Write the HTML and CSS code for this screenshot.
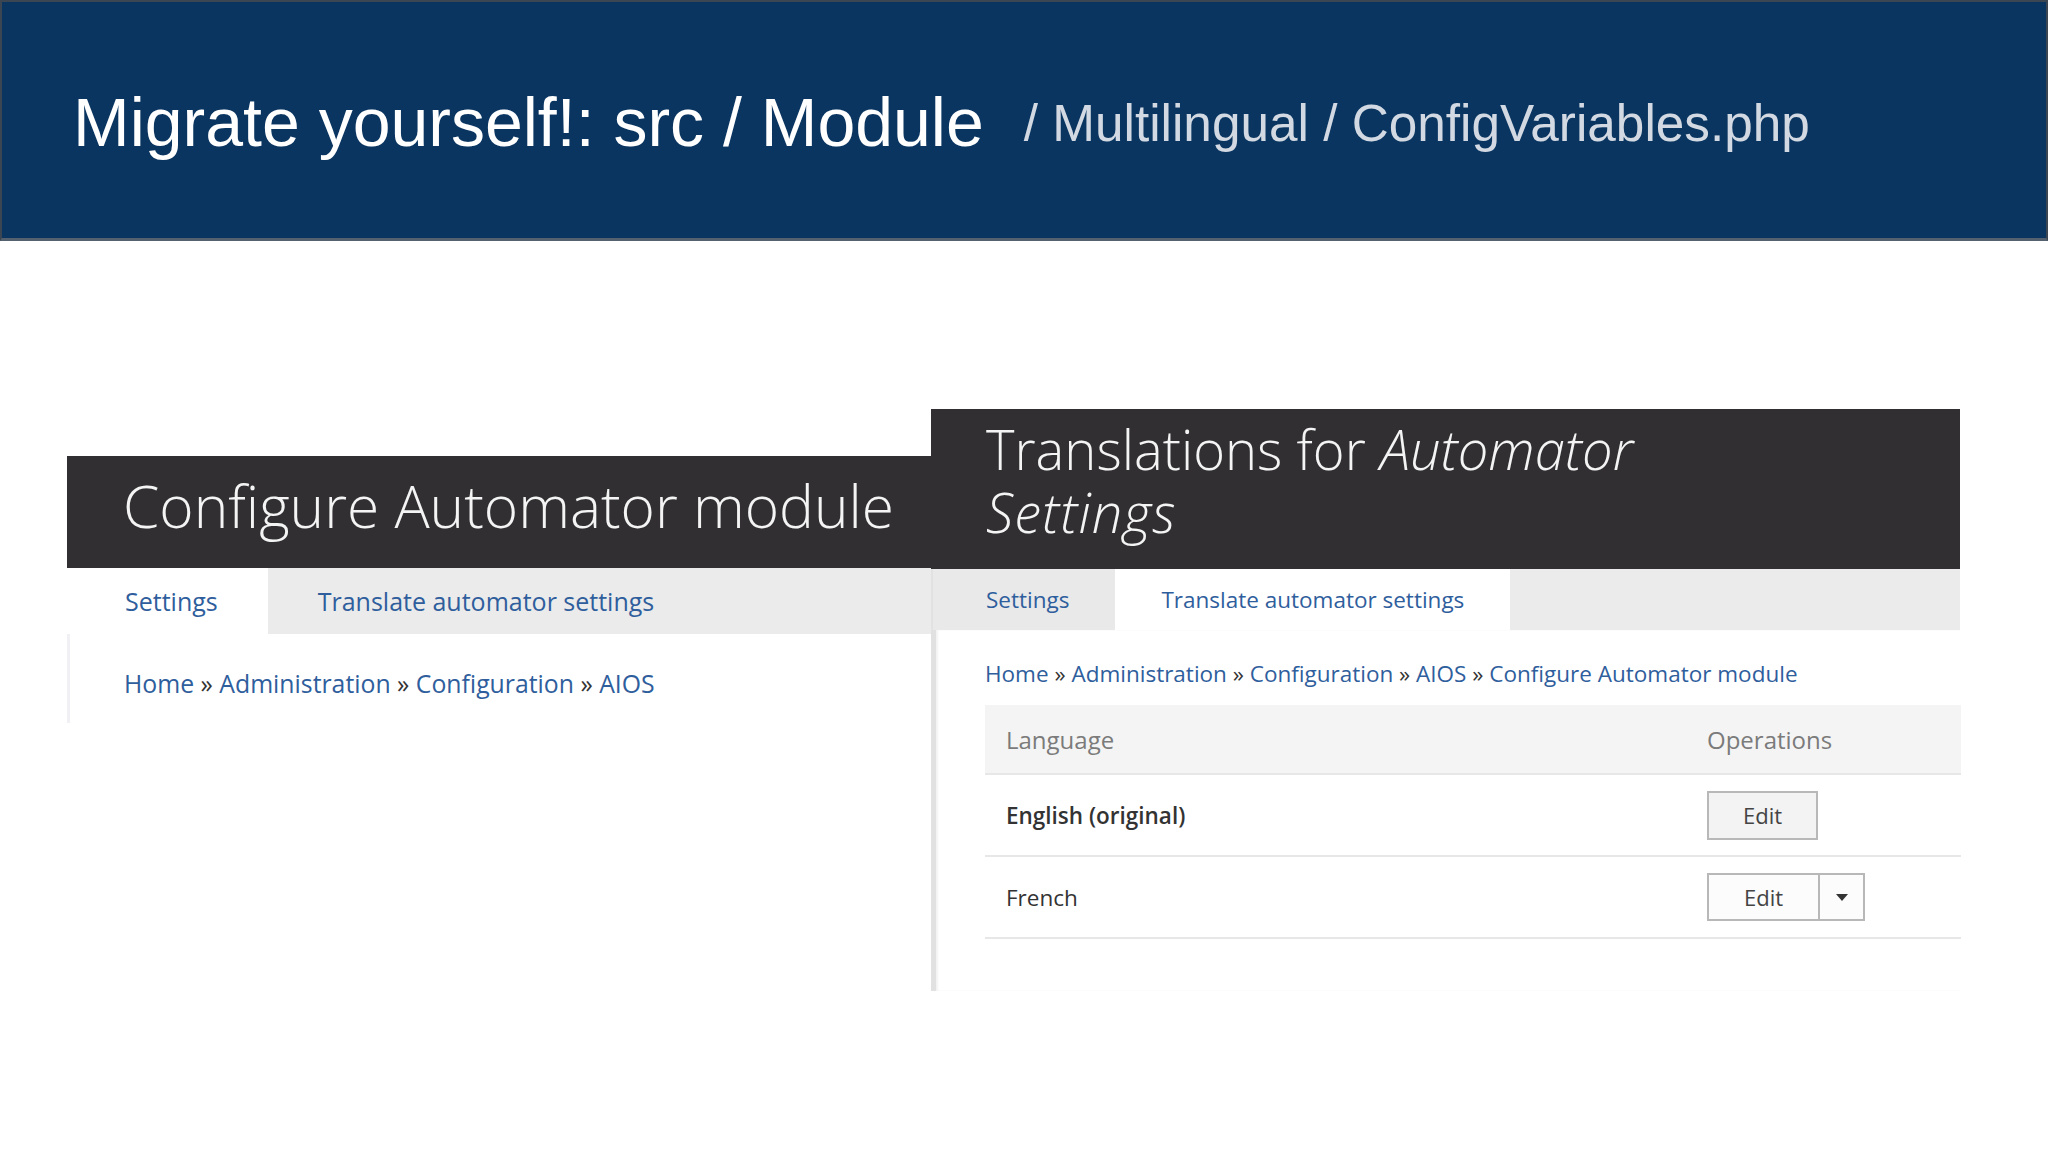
FILE: index.html
```html
<!DOCTYPE html>
<html lang="en">
<head>
<meta charset="utf-8">
<title>Migrate yourself!</title>
<link rel="stylesheet" href="styles.css">
</head>
<body>
<header class="slide-head">
  <h1 class="slide-title">Migrate yourself!: src / Module<span class="path">/ Multilingual / ConfigVariables.php</span></h1>
</header>
<main class="stage">
  <section class="panel panel-left">
    <div class="band band-left"><h2 class="band-title big">Configure Automator module</h2></div>
    <nav class="tabs tabs-left">
      <a class="tab active first">Settings</a>
      <a class="tab">Translate automator settings</a>
    </nav>
    <div class="body body-left">
      <div class="crumbs"><a>Home</a> » <a>Administration</a> » <a>Configuration</a> » <a>AIOS</a></div>
    </div>
  </section>
  <section class="panel panel-right">
    <div class="band band-right">
      <h2 class="band-title"><span class="line">Translations for <em>Automator</em></span><span class="line"><em class="wide">Settings</em></span></h2>
    </div>
    <nav class="tabs tabs-right">
      <a class="tab first">Settings</a>
      <a class="tab active">Translate automator settings</a>
    </nav>
    <div class="body body-right">
      <div class="crumbs small"><a>Home</a> » <a>Administration</a> » <a>Configuration</a> » <a>AIOS</a> » <a>Configure Automator module</a></div>
      <div class="table">
        <div class="row head"><div class="cell lang">Language</div><div class="cell ops">Operations</div></div>
        <div class="row"><div class="cell lang strong">English (original)</div><div class="cell ops"><span class="btn">Edit</span></div></div>
        <div class="row"><div class="cell lang">French</div><div class="cell ops"><span class="split"><span class="btn-part">Edit</span><span class="drop"><span class="tri"></span></span></span></div></div>
      </div>
    </div>
  </section>
</main>
</body>
</html>
```
FILE: styles.css
```css
html, body {
  margin: 0;
  padding: 0;
  background: #ffffff;
}
body {
  width: 2048px;
  height: 1152px;
  overflow: hidden;
  font-family: "Open Sans", "Liberation Sans", sans-serif;
}
.slide-head {
  box-sizing: border-box;
  height: 241px;
  background: #0a3560;
  border-top: 2px solid #3b4652;
  border-left: 2px solid #3b4652;
  border-right: 2px solid #3b4652;
  border-bottom: 3px solid #55616e;
  padding: 86px 0 0 71px;
}
.slide-title {
  margin: 0;
  font-family: "Liberation Sans", Arial, sans-serif;
  font-weight: 400;
  font-size: 68px;
  line-height: 68px;
  color: #ffffff;
  white-space: nowrap;
}
.path {
  font-size: 51.3px;
  color: #d2d9e2;
  margin-left: 40px;
  vertical-align: 5px;
}
.stage {
  display: flex;
  align-items: flex-start;
  padding: 168px 0 0 67px;
}
.panel-left {
  width: 864px;
  margin-top: 47px;
}
.panel-right {
  width: 1029px;
}
.band {
  box-sizing: border-box;
  background: #312f32;
  color: #f4f4f4;
}
.band-left {
  height: 112px;
  padding: 14px 0 0 56px;
}
.band-right {
  height: 160px;
  padding: 9px 0 0 55px;
}
.band-title {
  margin: 0;
  font-weight: 300;
  font-size: 54.3px;
  line-height: 63px;
  white-space: nowrap;
}
.band-title .line {
  display: block;
}
.band-title.big {
  font-size: 58.6px;
  line-height: 70px;
}
.band-title em {
  font-style: italic;
}
.band-title em.wide {
  letter-spacing: 1px;
}
.tabs {
  display: flex;
  background: #ebebeb;
}
.tab {
  display: block;
  color: #2f5e9d;
  white-space: nowrap;
}
.tabs-left {
  height: 66px;
  font-size: 25px;
  line-height: 66px;
}
.tabs-left .tab {
  padding: 0 50px;
}
.tabs-left .tab.first {
  padding: 0 50px 0 58px;
}
.tabs-right {
  height: 61px;
  font-size: 22.5px;
  line-height: 61px;
  border-left: 2px solid #e2e2e2;
}
.tabs-right .tab {
  padding: 0 46px;
}
.tabs-right .tab.first {
  padding: 0 46px 0 53px;
  background: #e9e9ea;
}
.tab.active {
  background: #ffffff;
}
.crumbs {
  font-size: 24.8px;
  line-height: 32px;
  color: #333333;
  white-space: nowrap;
}
.crumbs a {
  color: #2f5e9d;
}
.crumbs.small {
  font-size: 22.5px;
  line-height: 30px;
}
.body-left {
  box-sizing: border-box;
  height: 89px;
  padding: 33px 0 0 54px;
  border-left: 3px solid #f1f0f4;
}
.body-right {
  box-sizing: border-box;
  height: 361px;
  padding: 29px 0 0 49px;
  border-left: 5px solid #e1e1e1;
  box-shadow: inset 2px 0 2px #f3f3f3;
}
.table {
  margin-top: 16px;
  width: 976px;
}
.row {
  display: grid;
  grid-template-columns: 722px 1fr;
  align-items: center;
  height: 80px;
  border-bottom: 2px solid #e7e7e7;
  font-size: 22.5px;
  color: #333333;
}
.row.head {
  height: 68px;
  background: #f4f4f4;
  color: #7b7b7b;
  font-size: 24px;
}
.cell.lang {
  padding-left: 21px;
}
.strong {
  font-weight: 600;
}
.btn {
  display: inline-flex;
  align-items: center;
  justify-content: center;
  box-sizing: border-box;
  width: 111px;
  height: 49px;
  border: 2px solid #b8b8b8;
  background: #f3f3f3;
  color: #444444;
  font-size: 22px;
}
.split {
  display: inline-flex;
  box-sizing: border-box;
  height: 48px;
  border: 2px solid #b8b8b8;
  background: #fcfcfc;
  color: #444444;
  font-size: 22px;
}
.btn-part {
  display: flex;
  align-items: center;
  justify-content: center;
  width: 109px;
  border-right: 2px solid #b8b8b8;
}
.drop {
  display: flex;
  align-items: center;
  justify-content: center;
  width: 43px;
}
.tri {
  width: 0;
  height: 0;
  border-left: 6px solid transparent;
  border-right: 6px solid transparent;
  border-top: 7px solid #333333;
}
```
